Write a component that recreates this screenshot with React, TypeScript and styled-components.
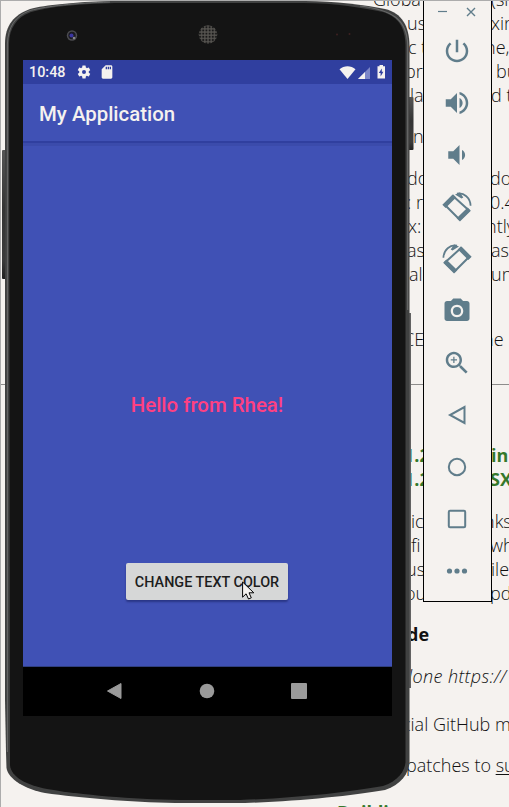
import React from 'react';
import styled, { createGlobalStyle, css } from 'styled-components';

const GlobalStyle = createGlobalStyle`
  * { box-sizing: border-box; }
  html, body { margin: 0; padding: 0; overflow: hidden; background: #f5f2ef; }
`;

const Desktop = styled.main`
  position: relative;
  width: 509px;
  height: 807px;
  overflow: hidden;
  background: #f5f2ef;
  border-top: 1px solid #acacac;
  border-left: 1px solid #acacac;
`;

/* ---------- web page behind the emulator ---------- */
const Article = styled.article`
  display: flex;
  flex-direction: column;
  margin: -14px 0 0 -1px;
  font: 340 18px/24px 'Open Sans', 'Noto Sans', sans-serif;
  color: #111;
`;

type Tone = 'plain' | 'green' | 'bold' | 'italic';

const Line = styled.div<{ $gap: number; $tone: Tone }>`
  display: grid;
  grid-template-columns: 424px 85px;
  height: 24px;
  margin-top: ${(p) => p.$gap}px;
  white-space: pre;
  ${(p) => p.$tone === 'green' && css`color: #35782b; font-weight: 700;`}
  ${(p) => p.$tone === 'bold' && css`font-weight: 700;`}
  ${(p) => p.$tone === 'italic' && css`font-style: italic; letter-spacing: 0.4px;`}
`;

const Fragment = styled.span<{ $indent: number }>`
  padding-left: ${(p) => p.$indent}px;
`;

const Divider = styled.hr`
  width: 100%;
  height: 1px;
  margin: 33px 0 58px;
  border: 0;
  background: #8d8c8b;
`;

const Underlined = styled.u`
  text-underline-offset: 2px;
`;

interface LineData {
  gap?: number;
  tone?: Tone;
  left: string;
  x: number;
  right?: string;
  rx?: number;
}

const upper: LineData[] = [
  { left: 'Globa', x: 373, right: '(si', rx: 67 },
  { left: 'ust', x: 407, right: 'xin', rx: 67 },
  { left: 'c t', x: 408, right: 'ne,', rx: 61 },
  { left: 'pro', x: 405, right: 'bu', rx: 72 },
  { left: 'la', x: 410, right: 'd t', rx: 67 },
  { gap: 17, left: 'n', x: 413 },
  { gap: 18, left: 'do', x: 407, right: 'do', rx: 66 },
  { left: ': r', x: 407, right: '0.4', rx: 66 },
  { left: 'x:', x: 408, right: 'ntly', rx: 62 },
  { left: 'as', x: 407, right: 'ast', rx: 67 },
  { left: 'al', x: 409, right: 'un', rx: 67 },
  { gap: 41, left: 'CE', x: 403, right: 'ne', rx: 59 },
];

const lower: LineData[] = [
  { tone: 'green', left: '1.2', x: 404, right: 'in', rx: 67 },
  { tone: 'green', left: '1.2', x: 404, right: 'SX', rx: 66 },
  { gap: 18, left: 'ic', x: 411, right: 'nks', rx: 60 },
  { left: 'fi', x: 411, right: 'wh', rx: 66 },
  { left: 'us', x: 406, right: 'ile', rx: 67 },
  { left: 'ou', x: 405, right: 'pd', rx: 66 },
  { gap: 17, tone: 'bold', left: 'de', x: 407 },
  { gap: 18, tone: 'italic', left: 'lone https://', x: 408 },
  { gap: 24, left: 'cial GitHub m', x: 402 },
];

const Lines = ({ rows }: { rows: LineData[] }) => (
  <>
    {rows.map((row, i) => (
      <Line key={i} $gap={row.gap ?? 0} $tone={row.tone ?? 'plain'}>
        <Fragment $indent={row.x}>{row.left}</Fragment>
        {row.right && <Fragment $indent={row.rx ?? 0}>{row.right}</Fragment>}
      </Line>
    ))}
  </>
);

/* ---------- phone ---------- */
const Phone = styled.section`
  position: absolute;
  top: -1px;
  left: -1px;
  width: 416px;
  height: 807px;
  padding: 60px 24px 0 23px;
`;

const Casing = styled.svg`
  position: absolute;
  inset: 0;
`;

const Screen = styled.div`
  position: relative;
  display: flex;
  flex-direction: column;
  width: 369px;
  height: 656px;
  background: #4051b5;
  font-family: Roboto, sans-serif;
`;

const StatusBar = styled.div`
  display: flex;
  align-items: center;
  height: 24px;
  padding: 0 6px 0 6px;
  background: #303f9f;
  color: #f5f2ef;
`;

const Clock = styled.span`
  width: 47px;
  font: 500 14.4px/24px Roboto, sans-serif;
  padding-top: 1px;
`;

const StatusIcons = styled.div`
  display: flex;
  align-items: center;
  gap: 7px;
  flex: 1;
`;

const SignalIcons = styled.div`
  display: flex;
  align-items: center;
  gap: 2px;
`;

const AppBar = styled.header`
  display: flex;
  align-items: center;
  height: 57px;
  padding: 3px 16px 0;
  color: #f5f2ef;
  font-size: 20.4px;
  font-weight: 500;
  box-shadow: 0 2px 0 #303f9f, 0 5px 0 #3b4bab;
`;

const Content = styled.div`
  display: flex;
  flex: 1;
  flex-direction: column;
  align-items: center;
  padding: 252px 1px 0 0;
  border-bottom: 1px solid #303f7f;
`;

const Greeting = styled.p`
  margin: 0;
  height: 24px;
  font-size: 20.4px;
  line-height: 24px;
  font-weight: 500;
  color: #ff4081;
`;

const ColorButton = styled.button`
  width: 162px;
  height: 37px;
  margin: 146px 0 0;
  padding: 1px 0 0;
  border: 0;
  border-radius: 2px;
  background: #d6d7d7;
  box-shadow: 0 2px 2px rgba(20, 28, 90, 0.5);
  color: #1d1d1d;
  font: 500 14.4px Roboto, sans-serif;
  white-space: nowrap;
`;

const NavBar = styled.nav`
  display: flex;
  align-items: center;
  justify-content: space-between;
  height: 49px;
  padding: 0 85px 1px 83px;
  background: #000;
`;

const Cursor = styled.svg`
  position: absolute;
  top: 581px;
  left: 242px;
`;

/* ---------- emulator toolbar ---------- */
const Toolbar = styled.aside`
  position: absolute;
  top: -1px;
  left: 422px;
  display: flex;
  flex-direction: column;
  width: 69px;
  height: 602px;
  background: #f5f2ef;
  border: solid #000;
  border-width: 0 1px 1px;
  color: #607d8b;
`;

const WindowControls = styled.div`
  display: flex;
  align-items: center;
  justify-content: flex-end;
  gap: 19px;
  height: 25px;
  padding: 0 15px 2px 0;
`;

const ToolButton = styled.button`
  display: flex;
  align-items: center;
  justify-content: center;
  width: 67px;
  height: 52px;
  padding: 0 1px 0 0;
  border: 0;
  background: none;
  color: inherit;
`;

const Solid = ({ d, size = 30 }: { d: string; size?: number }) => (
  <svg width={size} height={size} viewBox="0 0 24 24" fill="currentColor"><path d={d} /></svg>
);

const Outline = ({ children }: { children: React.ReactNode }) => (
  <svg width="30" height="30" viewBox="0 0 30 30" fill="none" stroke="currentColor" strokeWidth="2">{children}</svg>
);

const RotateDrawing = ({ mirrored = false }: { mirrored?: boolean }) => (
  <svg width="32" height="32" viewBox="0 0 32 32" fill="none" stroke="currentColor">
    <g transform={mirrored ? 'matrix(-1 0 0 1 31 0)' : 'translate(1 0)'}>
      <path d="M11 5 L2.5 13.5 L17.5 28.5 L27 19.5 Z" strokeWidth="2" strokeLinejoin="round" />
      <path d="M3.6 13.8 L11 6.4 M18 27.2 L25.6 19.8" strokeWidth="4.6" strokeLinecap="square" />
      <path d="M15 2.7 C22 1.2 28.3 7 28.6 14.7" strokeWidth="1.7" />
      <path d="M13 3.4 L18 1.5 L21.3 6.6 L19.5 7.6 Z" fill="currentColor" stroke="none" />
    </g>
  </svg>
);

const tools: { name: string; icon: React.ReactNode }[] = [
  { name: 'Power', icon: <Solid d="M13 3h-2v10h2V3zm4.83 2.17-1.42 1.42C17.99 7.86 19 9.81 19 12c0 3.87-3.13 7-7 7s-7-3.13-7-7c0-2.19 1.01-4.14 2.58-5.42L6.17 5.17C4.23 6.82 3 9.26 3 12c0 4.97 4.03 9 9 9s9-4.03 9-9c0-2.74-1.23-5.18-3.17-6.83z" /> },
  { name: 'Volume up', icon: <Solid d="M3 9v6h4l5 5V4L7 9H3zm13.5 3c0-1.77-1.02-3.29-2.5-4.03v8.05c1.48-.73 2.5-2.25 2.5-4.02zM14 3.23v2.06c2.89.86 5 3.54 5 6.71s-2.11 5.85-5 6.71v2.06c4.01-.91 7-4.49 7-8.77s-2.99-7.86-7-8.77z" /> },
  { name: 'Volume down', icon: <Solid d="M18.5 12c0-1.77-1.02-3.29-2.5-4.03v8.05c1.48-.73 2.5-2.25 2.5-4.02zM5 9v6h4l5 5V4L9 9H5z" /> },
  { name: 'Rotate left', icon: <RotateDrawing /> },
  { name: 'Rotate right', icon: <RotateDrawing mirrored /> },
  { name: 'Screenshot', icon: <Solid d="M9 2 7.17 4H4c-1.1 0-2 .9-2 2v12c0 1.1.9 2 2 2h16c1.1 0 2-.9 2-2V6c0-1.1-.9-2-2-2h-3.17L15 2H9zm3 15c-2.76 0-5-2.24-5-5s2.24-5 5-5 5 2.24 5 5-2.24 5-5 5zm0-1.8a3.2 3.2 0 1 0 0-6.4 3.2 3.2 0 0 0 0 6.4z" /> },
  { name: 'Zoom', icon: <Solid d="M15.5 14h-.79l-.28-.27C15.41 12.59 16 11.11 16 9.5 16 5.91 13.09 3 9.5 3S3 5.91 3 9.5 5.91 16 9.5 16c1.61 0 3.09-.59 4.23-1.57l.27.28v.79l5 4.99L20.49 19l-4.99-5zm-6 0C7.01 14 5 11.99 5 9.5S7.01 5 9.5 5 14 7.01 14 9.5 11.99 14 9.5 14zm2.5-4h-2v2H9v-2H7V9h2V7h1v2h2v1z" /> },
  { name: 'Back', icon: <Outline><path d="M22.5 7 V23 L8 15 Z" /></Outline> },
  { name: 'Home', icon: <Outline><circle cx="15" cy="15" r="8.2" /></Outline> },
  { name: 'Overview', icon: <Outline><rect x="6.8" y="6.8" width="16.4" height="16.4" rx="1.2" /></Outline> },
  { name: 'More', icon: <svg width="22" height="6" viewBox="0 0 22 6" fill="currentColor"><circle cx="3.5" cy="3" r="2.6" /><circle cx="11" cy="3" r="2.6" /><circle cx="18.5" cy="3" r="2.6" /></svg> },
];

const CASE_PATH =
  'M5 44 C5 25 14 15 30 9 C45 5 75 2 110 1 H305 C335 1 365 5 385 9 C402 13 409 26 409.5 45 V762 C409 773 401 785 385 790 C350 796 300 801 245 803 H175 C130 802 80 798 45 793 C25 789 8 779 6.5 768 L6 752 L5 700 Z';
const FACE_PATH =
  'M9 44 C9 28 17 17 31 12 C52 6 80 4 115 3 H303 C335 3 364 8 383 12 C399 17 405 28 405.5 45 V762 C405 771 398 781 383 786 C349 792 298 798 240 800 H180 C130 799 82 795 47 789 C26 785 11 777 10 765 Z';

export default function App() {
  return (
    <>
      <GlobalStyle />
      <Desktop>
        <Article>
          <Lines rows={upper} />
          <Divider />
          <Lines rows={lower} />
          <Line $gap={17} $tone="plain">
            <Fragment $indent={406}>patches to <Underlined>su</Underlined></Fragment>
          </Line>
          <Line $gap={23} $tone="green">
            <Fragment $indent={337}>Building</Fragment>
          </Line>
        </Article>

        <Phone>
          <Casing width="416" height="807" viewBox="0 0 416 807">
            <defs>
              <pattern id="mesh" width="3.2" height="3.2" patternUnits="userSpaceOnUse">
                <rect width="3.2" height="3.2" fill="#55534f" />
                <circle cx="1.6" cy="1.6" r="1.1" fill="#191919" />
              </pattern>
              <linearGradient id="key" x1="0" x2="0" y1="0" y2="1">
                <stop offset="0" stopColor="#555555" />
                <stop offset=".45" stopColor="#343434" />
                <stop offset=".85" stopColor="#3b3b3b" />
                <stop offset="1" stopColor="#202020" />
              </linearGradient>
            </defs>
            <rect x="2" y="150" width="6" height="129" rx="1" fill="url(#key)" />
            <rect x="408" y="97" width="5.5" height="53" rx="1" fill="url(#key)" />
            <rect x="408" y="313" width="3" height="375" fill="#626262" />
            <path d={CASE_PATH} fill="#404141" />
            <path d="M7.4 752 V44 C8 27 15 16 30 10.5 C48 6 75 3 110 2" fill="none" stroke="#686969" strokeWidth="1" />
            <path d="M360 6 C392 10 407 19 407.7 45 V310" fill="none" stroke="#686969" strokeWidth="1.2" />
            <path d={FACE_PATH} fill="#141414" />
            <circle cx="72" cy="35.5" r="5.2" fill="#4c4c50" />
            <circle cx="72" cy="35.5" r="3.7" fill="#1b1b22" />
            <circle cx="71.5" cy="35.5" r="2" fill="#3b36a0" />
            <circle cx="74" cy="38" r="1.3" fill="#85858d" />
            <circle cx="208" cy="34.5" r="9.3" fill="url(#mesh)" />
            <circle cx="337" cy="34.5" r="1" fill="#3e2222" />
            <circle cx="349.5" cy="34" r="1" fill="#3e2222" />
          </Casing>
          <Screen>
            <StatusBar>
              <Clock>10:48</Clock>
              <StatusIcons>
                <Solid size={16} d="M19.14 12.94c.04-.3.06-.61.06-.94 0-.32-.02-.64-.07-.94l2.03-1.58a.49.49 0 0 0 .12-.61l-1.92-3.32a.49.49 0 0 0-.59-.22l-2.39.96a7 7 0 0 0-1.62-.94l-.36-2.54a.48.48 0 0 0-.48-.41h-3.84a.48.48 0 0 0-.47.41l-.36 2.54c-.59.24-1.13.57-1.62.94l-2.39-.96a.48.48 0 0 0-.59.22L2.74 8.87a.48.48 0 0 0 .12.61l2.03 1.58a7 7 0 0 0 0 1.88l-2.03 1.58a.49.49 0 0 0-.12.61l1.92 3.32c.12.22.37.29.59.22l2.39-.96c.5.38 1.03.7 1.62.94l.36 2.54c.05.24.24.41.48.41h3.84c.24 0 .44-.17.47-.41l.36-2.54a7 7 0 0 0 1.62-.94l2.39.96c.22.08.47 0 .59-.22l1.92-3.32a.48.48 0 0 0-.12-.61zM12 15a3 3 0 1 1 0-6 3 3 0 0 1 0 6z" />
                <Solid size={16} d="M18 2h-8L4.02 8 4 20c0 1.1.9 2 2 2h12c1.1 0 2-.9 2-2V4c0-1.1-.9-2-2-2zm-6 6h-2V4h2v4zm3 0h-2V4h2v4zm3 0h-2V4h2v4z" />
              </StatusIcons>
              <SignalIcons>
                <svg width="17" height="13" viewBox="0 0 17 13"><path d="M.5 3.2 C5 -.7 12 -.7 16.5 3.2 L8.5 13 Z" fill="#f5f2ef" /></svg>
                <svg width="13" height="13" viewBox="0 0 13 13"><path d="M0 13 L12 1 V13 Z" fill="#7c86c8" /><path d="M0 13 L7 6 V13 Z" fill="#f5f2ef" /></svg>
                <svg width="13" height="14" viewBox="5 0 13 14"><path d="M9.5 1.3 H11.5 V0 H15 V1.3 H17 V13.5 H9.5 Z" fill="#f5f2ef" /><path d="M13.8 3.5 L10.8 8 H12.6 V11.5 L15.4 6.8 H13.8 Z" fill="#303f9f" /></svg>
              </SignalIcons>
            </StatusBar>
            <AppBar>My Application</AppBar>
            <Content>
              <Greeting>Hello from Rhea!</Greeting>
              <ColorButton>CHANGE TEXT COLOR</ColorButton>
            </Content>
            <NavBar>
              <svg width="16" height="18" viewBox="0 0 16 18"><path d="M15 1.5 V16.5 L1.5 9 Z" fill="#9a9a9a" stroke="#9a9a9a" strokeLinejoin="round" /></svg>
              <svg width="16" height="16" viewBox="0 0 16 16"><circle cx="8" cy="8" r="7.3" fill="#9a9a9a" /></svg>
              <svg width="16" height="16" viewBox="0 0 16 16"><rect width="16" height="16" rx="1" fill="#9a9a9a" /></svg>
            </NavBar>
          </Screen>
          <Cursor width="13" height="19" viewBox="0 0 13 19">
            <path d="M.6 1 V16.2 L4.1 12.8 L6.5 18 L9.3 16.8 L7 11.8 H11.8 Z" fill="#f5f2ef" stroke="#000" strokeWidth="1" />
          </Cursor>
        </Phone>

        <Toolbar>
          <WindowControls>
            <svg width="9" height="9" viewBox="0 0 9 9"><path d="M0 4.5 H9" stroke="currentColor" strokeWidth="1.2" /></svg>
            <svg width="10" height="10" viewBox="0 0 10 10"><path d="M1 1 L9 9 M9 1 L1 9" stroke="currentColor" strokeWidth="1.4" /></svg>
          </WindowControls>
          {tools.map((tool) => (
            <ToolButton key={tool.name} aria-label={tool.name}>{tool.icon}</ToolButton>
          ))}
        </Toolbar>
      </Desktop>
    </>
  );
}
